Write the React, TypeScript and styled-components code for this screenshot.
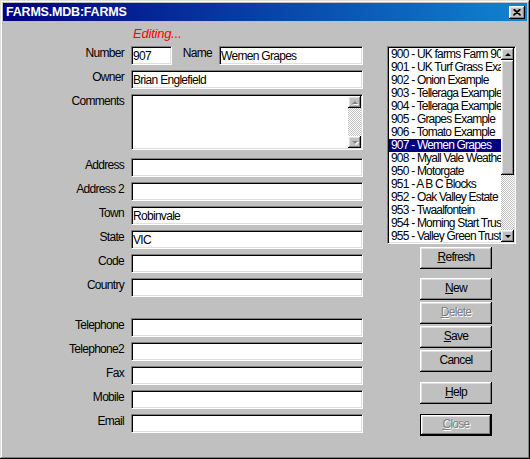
import React from "react";
import styled, { createGlobalStyle, css } from "styled-components";

const GlobalStyle = createGlobalStyle`
  html, body { margin: 0; padding: 0; background: #c0c0c0; }
  * { box-sizing: border-box; }
  body { font-family: "Liberation Sans", Arial, sans-serif; }
`;

const raised = css`
  box-shadow: inset -1px -1px #000, inset 1px 1px #fff, inset -2px -2px #808080, inset 2px 2px #dfdfdf;
`;

const sunken = css`
  border: 1px solid;
  border-color: #808080 #fff #fff #808080;
  box-shadow: inset 1px 1px #000, inset -1px -1px #dfdfdf;
`;

const Window = styled.div`
  width: 530px;
  height: 459px;
  padding: 3px;
  background: #c0c0c0;
  box-shadow: inset -1px -1px #000, inset 1px 1px #dfdfdf, inset -2px -2px #808080, inset 2px 2px #fff;
  display: flex;
  flex-direction: column;
  font-size: 12px;
  letter-spacing: -0.7px;
  color: #000;
`;

const TitleBar = styled.div`
  height: 18px;
  display: flex;
  align-items: center;
  justify-content: space-between;
  padding: 0 2px 0 3px;
  background: linear-gradient(to right, #000080, #1084d0);
`;

const TitleText = styled.div`
  color: #fff;
  font-weight: bold;
  font-size: 12.5px;
  letter-spacing: -0.2px;
  line-height: 18px;
`;

const CaptionButton = styled.div`
  width: 16px;
  height: 13px;
  background: #c0c0c0;
  ${raised};
  display: flex;
  align-items: center;
  justify-content: center;
`;

const Body = styled.div`
  display: flex;
  align-items: flex-start;
  padding-top: 6px;
`;

const Form = styled.div`
  display: flex;
  flex-direction: column;
  gap: 5px;
`;

const Row = styled.div<{ $mt?: number }>`
  display: grid;
  grid-template-columns: 121px 232px;
  column-gap: 7px;
  margin-top: ${(p) => p.$mt ?? 0}px;
`;

const Status = styled.div`
  grid-column: 2;
  margin-left: 2px;
  color: #ff0000;
  font-style: italic;
  font-size: 13px;
  letter-spacing: -0.2px;
  line-height: 14px;
`;

const Label = styled.div`
  text-align: right;
  line-height: 14px;
  white-space: nowrap;
`;

const Field = styled.div<{ $w?: number }>`
  ${sunken};
  background: #fff;
  height: 19px;
  width: ${(p) => (p.$w ? `${p.$w}px` : "auto")};
  padding: 2px 2px 0 1px;
  line-height: 14px;
  white-space: nowrap;
  overflow: hidden;
`;

const FieldLine = styled.div`
  display: flex;
  align-items: flex-start;
`;

const NameLabel = styled(Label)`
  flex: 1;
  padding-right: 7px;
`;

const Memo = styled.div`
  ${sunken};
  background: #fff;
  height: 56px;
  display: flex;
  padding: 1px;
`;

const MemoText = styled.div`
  flex: 1;
`;

const ScrollBar = styled.div`
  width: 13px;
  display: flex;
  flex-direction: column;
`;

const Arrow = styled.div`
  height: 12px;
  flex: none;
  background: #c0c0c0;
  ${raised};
  display: flex;
  align-items: center;
  justify-content: center;
`;

const Thumb = styled.div<{ $h: number }>`
  height: ${(p) => p.$h}px;
  flex: none;
  background: #c0c0c0;
  ${raised};
`;

const Track = styled.div`
  flex: 1;
  background-color: #c0c0c0;
  background-image: conic-gradient(#fff 25%, #c0c0c0 0 50%, #fff 0 75%, #c0c0c0 0);
  background-size: 2px 2px;
`;

const Side = styled.div`
  margin-left: 24px;
  margin-top: 19px;
  display: flex;
  flex-direction: column;
`;

const ListBox = styled.div`
  ${sunken};
  width: 129px;
  height: 198px;
  background: #fff;
  padding: 1px;
  display: flex;
`;

const Items = styled.div`
  flex: 1;
  overflow: hidden;
  min-width: 0;
`;

const Item = styled.div<{ $selected?: boolean }>`
  height: 13px;
  line-height: 13px;
  padding-left: 2px;
  white-space: nowrap;
  overflow: hidden;
  letter-spacing: -0.8px;
  background: ${(p) => (p.$selected ? "#000080" : "transparent")};
  color: ${(p) => (p.$selected ? "#fff" : "#000")};
`;

const Buttons = styled.div`
  margin-left: 33px;
  width: 72px;
  display: flex;
  flex-direction: column;
`;

const Button = styled.div<{ $mt?: number; $disabled?: boolean; $default?: boolean }>`
  height: 22px;
  margin-top: ${(p) => p.$mt ?? 0}px;
  background: #c0c0c0;
  display: flex;
  align-items: center;
  justify-content: center;
  padding-bottom: 2px;
  line-height: 14px;
  ${raised};
  ${(p) =>
    p.$default &&
    css`
      border: 1px solid #000;
    `}
  ${(p) =>
    p.$disabled &&
    css`
      color: #808080;
      text-shadow: 1px 1px #fff;
    `}
`;

const U = styled.span`
  text-decoration: underline;
`;

const ArrowGlyph = ({ down, disabled }: { down?: boolean; disabled?: boolean }) => {
  const pts = down ? "2,2 8,2 5,5" : "5,2 8,5 2,5";
  return (
    <svg width="9" height="7" viewBox="0 0 9 7">
      {disabled && <polygon points={pts} fill="#fff" transform="translate(1,1)" />}
      <polygon points={pts} fill={disabled ? "#808080" : "#000"} />
    </svg>
  );
};

const CloseGlyph = () => (
  <svg width="8" height="7" viewBox="0 0 8 7">
    <path d="M0.5 0.5 L7.5 6.5 M1.5 0.5 L7.5 6 M7.5 0.5 L0.5 6.5 M6.5 0.5 L0.5 6" stroke="#000" strokeWidth="1.2" fill="none" />
  </svg>
);

const farms = [
  "900 - UK farms Farm 900",
  "901 - UK Turf Grass Example",
  "902 - Onion Example",
  "903 - Telleraga Example",
  "904 - Telleraga Example",
  "905 - Grapes Example",
  "906 - Tomato Example",
  "907 - Wemen Grapes",
  "908 - Myall Vale Weather",
  "950 - Motorgate",
  "951 - A B C Blocks",
  "952 - Oak Valley Estate",
  "953 - Twaalfontein",
  "954 - Morning Start Trust",
  "955 - Valley Green Trust",
];

const simpleFields: { label: string; value?: string; mt?: number }[] = [
  { label: "Address", mt: 3 },
  { label: "Address 2" },
  { label: "Town", value: "Robinvale" },
  { label: "State", value: "VIC" },
  { label: "Code" },
  { label: "Country" },
  { label: "Telephone", mt: 16 },
  { label: "Telephone2" },
  { label: "Fax" },
  { label: "Mobile" },
  { label: "Email" },
];

export default function App() {
  return (
    <>
      <GlobalStyle />
      <Window>
        <TitleBar>
          <TitleText>FARMS.MDB:FARMS</TitleText>
          <CaptionButton>
            <CloseGlyph />
          </CaptionButton>
        </TitleBar>
        <Body>
          <Form>
            <Row>
              <Status>Editing...</Status>
            </Row>
            <Row>
              <Label>Number</Label>
              <FieldLine>
                <Field $w={41}>907</Field>
                <NameLabel>Name</NameLabel>
                <Field $w={144}>Wemen Grapes</Field>
              </FieldLine>
            </Row>
            <Row>
              <Label>Owner</Label>
              <Field>Brian Englefield</Field>
            </Row>
            <Row>
              <Label>Comments</Label>
              <Memo>
                <MemoText />
                <ScrollBar>
                  <Arrow>
                    <ArrowGlyph disabled />
                  </Arrow>
                  <Track />
                  <Arrow>
                    <ArrowGlyph down disabled />
                  </Arrow>
                </ScrollBar>
              </Memo>
            </Row>
            {simpleFields.map((f) => (
              <Row key={f.label} $mt={f.mt}>
                <Label>{f.label}</Label>
                <Field>{f.value ?? ""}</Field>
              </Row>
            ))}
          </Form>
          <Side>
            <ListBox>
              <Items>
                {farms.map((f) => (
                  <Item key={f} $selected={f.startsWith("907")}>
                    {f}
                  </Item>
                ))}
              </Items>
              <ScrollBar>
                <Arrow>
                  <ArrowGlyph />
                </Arrow>
                <Thumb $h={115} />
                <Track />
                <Arrow>
                  <ArrowGlyph down />
                </Arrow>
              </ScrollBar>
            </ListBox>
            <Buttons>
              <Button $mt={3}>
                <span>
                  <U>R</U>efresh
                </span>
              </Button>
              <Button $mt={9}>
                <span>
                  <U>N</U>ew
                </span>
              </Button>
              <Button $mt={2} $disabled>
                <span>
                  <U>D</U>elete
                </span>
              </Button>
              <Button $mt={2}>
                <span>
                  <U>S</U>ave
                </span>
              </Button>
              <Button $mt={2}>Cancel</Button>
              <Button $mt={10}>
                <span>
                  <U>H</U>elp
                </span>
              </Button>
              <Button $mt={10} $disabled $default>
                <span>
                  <U>C</U>lose
                </span>
              </Button>
            </Buttons>
          </Side>
        </Body>
      </Window>
    </>
  );
}
